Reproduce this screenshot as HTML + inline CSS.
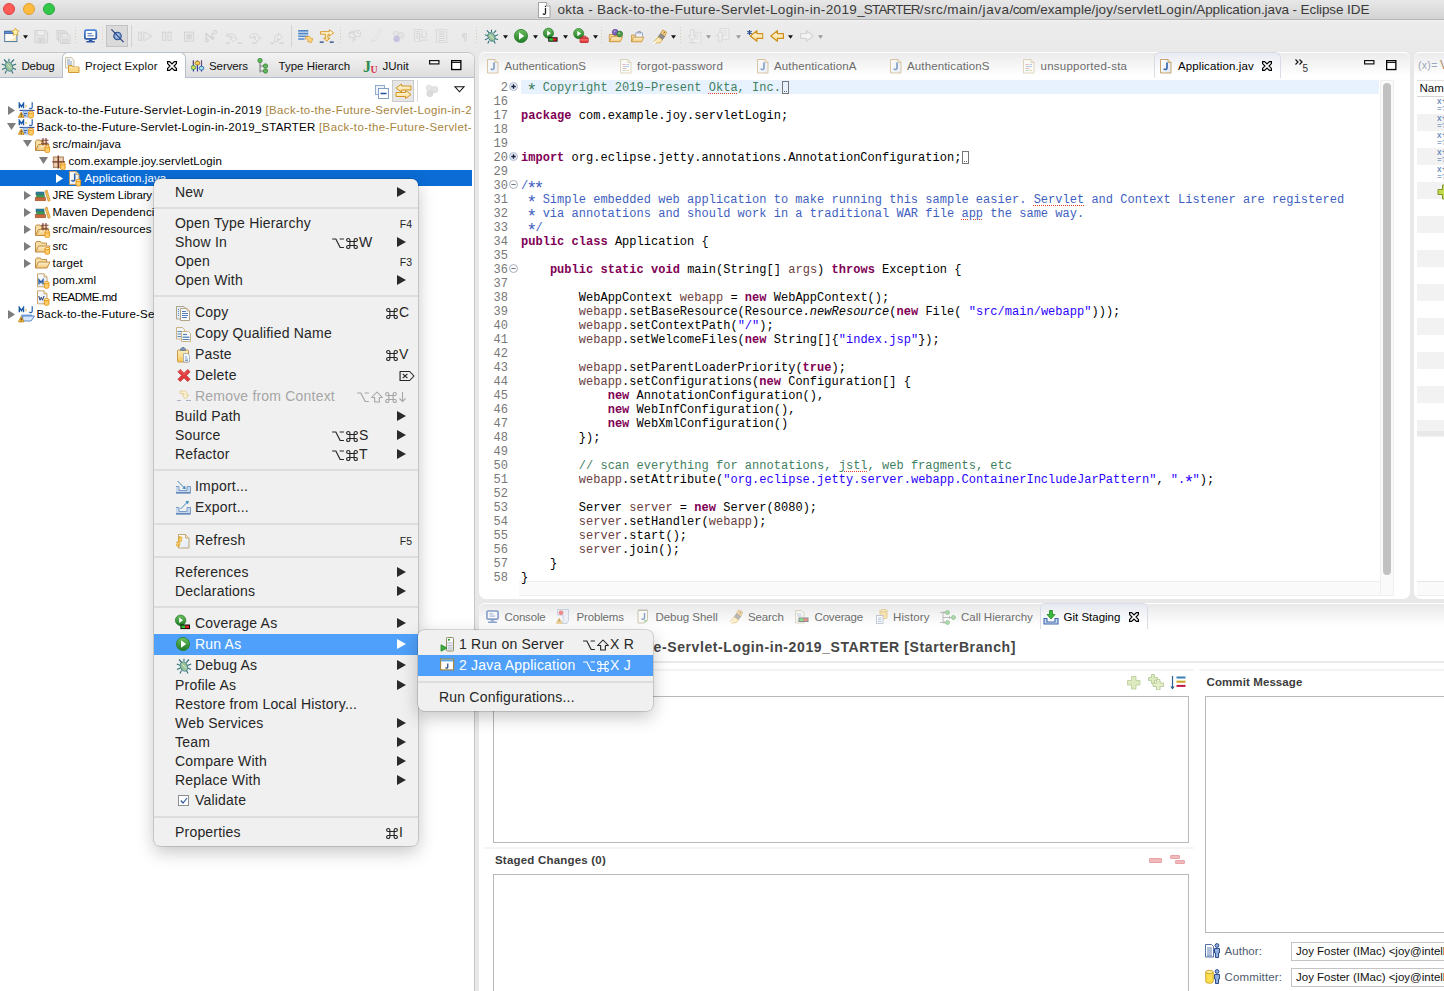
<!DOCTYPE html>
<html>
<head>
<meta charset="utf-8">
<title>Eclipse IDE</title>
<style>
*{box-sizing:border-box;margin:0;padding:0}
html,body{width:1444px;height:991px;overflow:hidden;background:#e8e8e8;font-family:"Liberation Sans",sans-serif;}
body{position:relative}
.abs{position:absolute}
svg.abs{overflow:visible}
.t{position:absolute;white-space:pre;line-height:1}
/* title bar */
#titlebar{left:0;top:0;width:1444px;height:20px;background:linear-gradient(#e8e8e8,#d3d3d3);border-bottom:1px solid #b7b7b7}
.tl{position:absolute;top:3px;width:12px;height:12px;border-radius:50%}
.ttl{top:3px;font-size:13.500px;color:#3a3a3a}
/* panels */
.panel{position:absolute;background:#fff;border:1px solid #d0d0d0}
/* tree */
.tr{position:absolute;left:0;width:472px;height:17px}
.tr .tx{position:absolute;top:1.500px;font-size:11.500px;white-space:pre;color:#000;line-height:13px}
.dec{color:#a78440}
/* code */
.ln{position:absolute;margin-top:1px;left:480px;width:28px;text-align:right;font:12px/14px "Liberation Mono",monospace;color:#787878;white-space:pre}
.cl{position:absolute;margin-top:1px;left:521px;font:12px/14px "Liberation Mono",monospace;color:#000;white-space:pre;letter-spacing:.019px}
.k{color:#7f0055;font-weight:bold}
.c{color:#3f5fbf}
.g{color:#3f7f5f}
.s{color:#2a00ff}
.v{color:#6a3e3e}
.i{font-style:italic}
.as{display:inline-block;width:7.200px;font-size:17.500px;line-height:0;position:relative;top:5.200px;text-indent:-1.650px;vertical-align:baseline}
.sq{text-decoration:underline;text-decoration-style:dotted;text-decoration-color:#e0402a;text-underline-offset:2px}
.fbox{display:inline-block;width:7px;height:13px;border:1px solid #777;vertical-align:-3px;margin-left:1px;position:relative}
.fbox:after{content:"";position:absolute;left:1px;bottom:1px;width:3px;height:1px;background:repeating-linear-gradient(90deg,#666 0 1px,transparent 1px 2px)}
.lt{top:61px;font-size:11.500px;color:#111}
.et{top:60.500px;font-size:11.500px}
.gl{display:block;flex:none}
.bt{top:611.500px;font-size:11.5px;letter-spacing:.15px;color:#6e6e6e}
#ghead{font-weight:bold;font-size:14px;color:#454545;letter-spacing:.6px}
.bl{font-weight:bold;font-size:11.5px;letter-spacing:.2px;color:#3c3c3c}
.box{background:#fff;border:1px solid #b9b9b9}
.al{font-size:11.5px;color:#4f5a6e;letter-spacing:.05px}
.inp{width:170px;height:19px;background:#fff;border:1px solid #c4c4c4}
.av{font-size:11.5px;color:#111;letter-spacing:0}
/* menus */
.menu{position:absolute;background:#f0f0f0;border-radius:6px;box-shadow:0 0 0 .5px rgba(0,0,0,.26),0 6px 18px rgba(0,0,0,.23);padding:4px 0;font-size:14px;letter-spacing:.2px;color:#262626}
.mi{position:relative;height:19px;white-space:pre}
.mi.ic{height:21px}
.mi .lb{position:absolute;left:21px;top:2px;line-height:15px}
.mi.ic .lb{left:41px;top:3px}
.mi .sc{position:absolute;top:2px;line-height:15px;height:15px;right:8px;display:flex;align-items:center}
.mi.ic .sc{top:3px}
.mi .ar{position:absolute;right:12.500px;top:3.800px;width:0;height:0;border-left:9px solid #2a2a2a;border-top:5px solid transparent;border-bottom:5px solid transparent}
.mi.ic .ar{top:4.800px}
.mi .sc.fk{font-size:10.500px;letter-spacing:0;right:6px;top:2.600px}
.mi.ic .sc.fk{top:3.700px}
.mi.hl{background:#4ea0fa;color:#fff}
.mi.hl .ar{border-left-color:#fff}
.mi.dis{color:#a6a6a6}
.sep{height:12px;position:relative}
.sep:after{content:"";position:absolute;left:0;right:0;top:5px;height:2px;background:#dddddd}
.mico{position:absolute;left:22px;top:2.500px;width:16px;height:16px;overflow:visible}
</style>
</head>
<body>
<svg width="0" height="0" style="position:absolute">
<defs>
<linearGradient id="gGreen" x1="0" y1="0" x2="0" y2="1"><stop offset="0" stop-color="#6cc15f"/><stop offset="1" stop-color="#1e7a25"/></linearGradient>
<linearGradient id="gFold" x1="0" y1="0" x2="0" y2="1"><stop offset="0" stop-color="#fff3cf"/><stop offset="1" stop-color="#f0c678"/></linearGradient>
<linearGradient id="gYel" x1="0" y1="0" x2="0" y2="1"><stop offset="0" stop-color="#fff1c0"/><stop offset="1" stop-color="#f7c55a"/></linearGradient>
<linearGradient id="gDoc" x1="0" y1="0" x2="1" y2="1"><stop offset="0" stop-color="#ffffff"/><stop offset="1" stop-color="#dfe8f5"/></linearGradient>
<g id="d-cyl"><path d="M.5 1.600v4.600c0 .7 1 1.100 2.300 1.100s2.300-.4 2.300-1.100V1.600" fill="#ffcf6b" stroke="#e3900e" stroke-width=".9"/><ellipse cx="2.800" cy="1.600" rx="2.300" ry="1.100" fill="#ffe9b0" stroke="#e3900e" stroke-width=".9"/></g>
<g id="d-warn"><path d="M3.200.6L.4 6.100h5.600z" fill="#f9c845" stroke="#c9861a" stroke-width=".8" stroke-linejoin="round"/><path d="M3.200 2.300v2" stroke="#3a2a10" stroke-width="1"/><rect x="2.700" y="4.700" width="1" height=".8" fill="#3a2a10"/></g>
<g id="d-mj"><path d="M1.300 6.300V1.400L3.400 4.600 5.500 1.400V6.300" fill="none" stroke="#1d5aa8" stroke-width="1.400"/><path d="M7.200 3l1.400 1.100-1.400 1.100" fill="none" stroke="#e2a53a" stroke-width=".9"/><path d="M14.200.3v5c0 1.600-2 1.800-2.900.5" fill="none" stroke="#2a62aa" stroke-width="1.200"/></g>

<symbol id="i-mj" viewBox="0 0 17 17"><use href="#d-mj"/><path d="M1.500 8.400H16.500" stroke="#2a4c9c" stroke-width="1.100"/><rect x="5" y="9" width="5" height="6" fill="#bcd6f5" stroke="#78a3de" stroke-width=".8"/><path d="M6 11.500h3M6 13.300h2" stroke="#2a4c9c" stroke-width=".9"/><use href="#d-warn" transform="translate(0,9.300)"/><use href="#d-cyl" transform="translate(10.200,8.700)"/></symbol>
<symbol id="i-mj2" viewBox="0 0 17 17"><use href="#d-mj"/><path d="M3.500 9h10.500l-2 5.500h-7z" fill="#a9cbf3" stroke="#5d8fd6" stroke-width=".8"/><path d="M4.500 10h12l-3.500 5h-8z" fill="#d6e7fb" stroke="#3d6fc0" stroke-width=".8"/><use href="#d-warn" transform="translate(0,9.800)"/></symbol>
<symbol id="i-srcf" viewBox="0 0 17 17"><path d="M1.500 14.500V5.500l1-1.500h3.500l1 1.500h5v3" fill="#f7dfa6" stroke="#b98235" stroke-width=".9"/><path d="M1.500 14.500l3-6h10.500l-3 6z" fill="url(#gFold)" stroke="#b98235" stroke-width=".9" stroke-linejoin="round"/><path d="M2 14l7-8" stroke="#c99a4a" stroke-width=".6"/><path d="M7 4.300h7.500M7 7.300h7.500M9 2v7.500M12 2v7.500" stroke="#7b3f30" stroke-width="1.100" fill="none"/><rect x="9.600" y="4.900" width="1.800" height="1.800" fill="#f0dcb8"/><use href="#d-cyl" transform="translate(10.500,9.300)"/></symbol>
<symbol id="i-pkg" viewBox="0 0 17 17"><rect x="3.300" y="3.900" width="10.200" height="10.800" fill="#dab892" stroke="#a87858" stroke-width=".8"/><rect x="4.600" y="5.200" width="2.600" height="2.600" fill="#ecd8bc"/><rect x="9.400" y="5.200" width="2.800" height="2.600" fill="#ecd8bc"/><rect x="4.600" y="10.200" width="2.600" height="3" fill="#ecd8bc"/><path d="M2.300 8.900h12.700M8.300 2.500v13" stroke="#74392b" stroke-width="1.400"/><use href="#d-cyl" transform="translate(10,9.400)"/></symbol>
<symbol id="i-jfile" viewBox="0 0 17 17"><path d="M3.500 1.500h6.500l3 3v10h-9.500z" fill="url(#gDoc)" stroke="#c39b5b" stroke-width=".9"/><path d="M10 1.500v3h3" fill="#f3e3c0" stroke="#c39b5b" stroke-width=".8"/><path d="M8.700 3.500v6c0 1.800-2.300 2-3.200.6" fill="none" stroke="#2c5fa5" stroke-width="1.500"/><use href="#d-cyl" transform="translate(9.500,8.800)"/></symbol>
<symbol id="i-lib" viewBox="0 0 17 17"><rect x="2" y="5" width="8" height="2.800" fill="#2f7f9a" stroke="#1f5f78" stroke-width=".5"/><rect x="2.500" y="7.800" width="8" height="2.800" fill="#3c9a5a" stroke="#2a7341" stroke-width=".5"/><rect x="1.200" y="10.600" width="10.500" height="3.200" fill="#c8683a" stroke="#9a4a24" stroke-width=".5"/><path d="M11 4l2-1 3.200 10.500-2 .8z" fill="#f4c05a" stroke="#c98a2a" stroke-width=".7" stroke-linejoin="round"/></symbol>
<symbol id="i-fold" viewBox="0 0 17 17"><path d="M1.500 13V4.500l1-1.500h4l1 1.500h5v2.500" fill="#f7dfa6" stroke="#b98235" stroke-width=".9"/><path d="M1.500 13l3-6h11.500l-3 6z" fill="url(#gFold)" stroke="#b98235" stroke-width=".9" stroke-linejoin="round"/></symbol>
<symbol id="i-fold2" viewBox="0 0 17 17"><path d="M1.500 14V5l1-1.500h4l1 1.500h5v2.500" fill="#f7dfa6" stroke="#b98235" stroke-width=".9"/><path d="M1.500 14l3-6h11.500l-3 6z" fill="url(#gFold)" stroke="#b98235" stroke-width=".9" stroke-linejoin="round"/><use href="#d-cyl" transform="translate(10.500,9)"/></symbol>
<symbol id="i-pom" viewBox="0 0 17 17"><path d="M3.500 1.800h6.500l3 3v10h-9.500z" fill="url(#gDoc)" stroke="#c39b5b" stroke-width=".9"/><path d="M10 1.800v3h3" fill="#f3e3c0" stroke="#c39b5b" stroke-width=".8"/><path d="M5 12.500V7.800l2 2.700 2-2.700v4.700" fill="none" stroke="#2c5fa5" stroke-width="1.400"/><use href="#d-cyl" transform="translate(9.800,9)"/></symbol>
<symbol id="i-md" viewBox="0 0 17 17"><path d="M3.500 1.800h6.500l3 3v10h-9.500z" fill="url(#gDoc)" stroke="#c39b5b" stroke-width=".9"/><path d="M10 1.800v3h3" fill="#f3e3c0" stroke="#c39b5b" stroke-width=".8"/><path d="M4.800 7.500l1.300 3.700 1.200-3 1.200 3 1.300-3.700" fill="none" stroke="#2c3f7a" stroke-width="1"/><path d="M4.500 7.500h1M9.300 7.500h1" stroke="#2c3f7a" stroke-width=".8"/><use href="#d-cyl" transform="translate(9.800,9)"/></symbol>

<!-- menu icons -->
<symbol id="m-copy" viewBox="0 0 16 16"><path d="M.5 1.500h7.500l2 2v10.500h-9.500z" fill="#e4ecf7" stroke="#a89a78" stroke-width=".9"/><path d="M2 4.500h1M2 6.500h1M2 8.500h1M2 10.500h1" stroke="#5d86b8" stroke-width="1"/><path d="M4.500 3.500h6.500l2.500 2.500v9.500h-9z" fill="#f9fbfe" stroke="#a89a78" stroke-width=".9"/><path d="M11 3.500v2.500h2.500" fill="#ecdcb4" stroke="#a89a78" stroke-width=".7"/><path d="M6 6.500h4M6 8.500h6M6 10.500h6M6 12.500h5" stroke="#4f7db5" stroke-width="1"/></symbol>
<symbol id="m-copyq" viewBox="0 0 16 16"><path d="M.5 1.500h6l2 2v9.500h-8z" fill="#eef3fa" stroke="#c7ad78" stroke-width=".9"/><path d="M1.500 5.500h5M1.500 8h4M1.500 10.500h4" stroke="#5d86b8" stroke-width="1.200"/><path d="M5.500 5.500h7l2 2v8h-9z" fill="#f9fbfe" stroke="#c7ad78" stroke-width=".9"/><path d="M7 8.500h4" stroke="#4f7db5" stroke-width="1.200"/><rect x="6.500" y="10.500" width="7" height="1.500" fill="#6f93c4"/><path d="M6.500 13.500h7" stroke="#4f7db5" stroke-width="1"/></symbol>
<symbol id="m-paste" viewBox="0 0 16 16"><rect x="1.500" y="3" width="11" height="12" rx="1" fill="url(#gYel)" stroke="#c98f3a" stroke-width=".9"/><path d="M4.500 3.500v-1.500l1.500-1.500h2l1.500 1.500v1.500z" fill="#7f93b0" stroke="#5b6f8e" stroke-width=".7"/><path d="M7.500 6.500h4l2 2v6.500h-6z" fill="#f7fafd" stroke="#9aa3ad" stroke-width=".8"/><path d="M9 10h2M9 12h3M9 13.500h3" stroke="#5d86b8" stroke-width=".8"/></symbol>
<symbol id="m-del" viewBox="0 0 16 16"><path d="M2 3.800L4.300 1.500 8 5.200 11.700 1.500 14 3.800 10.300 7.500 14 11.200 11.700 13.500 8 9.800 4.300 13.500 2 11.200 5.700 7.500z" fill="#e03a3c" stroke="#c2272b" stroke-width=".8" stroke-linejoin="round"/><path d="M3.300 3.800l1-1 3.700 3.700 3.700-3.700" stroke="#f2787a" stroke-width=".8" fill="none"/></symbol>
<symbol id="m-rem" viewBox="0 0 16 16"><path d="M4 2h4c2.500 0 3.500 2 3 4h1.800l-3.300 4-3.300-4h1.800c.3-1-.2-1.500-1-1.500h-3z" fill="#fbf0cf" stroke="#e2c98a" stroke-width=".8" stroke-linejoin="round"/><path d="M1 11.500h4M10 11.500h5" stroke="#a9b3c4" stroke-width="1"/></symbol>
<symbol id="m-imp" viewBox="0 0 16 16"><path d="M-.5 7.500h3.500v4h8v-4h3.500v6h-15z" fill="#c7d8ee" stroke="#6f93c4" stroke-width=".9"/><path d="M-.5 14h15" stroke="#5b7fb5" stroke-width="1.200"/><path d="M1.500 2l7 7" stroke="#3b8ab8" stroke-width="1"/><path d="M9.800 10.300l-.8-3.600-2.800 2.800z" fill="#3b8ab8"/></symbol>
<symbol id="m-exp" viewBox="0 0 16 16"><path d="M-.5 7.500h3.500v4h8v-4h3.500v6h-15z" fill="#c7d8ee" stroke="#6f93c4" stroke-width=".9"/><path d="M-.5 14h15" stroke="#5b7fb5" stroke-width="1.200"/><path d="M4.500 9l7-7" stroke="#3b8ab8" stroke-width="1"/><path d="M12.800.7l-3.600.8 2.800 2.800z" fill="#3b8ab8"/></symbol>
<symbol id="m-refresh" viewBox="0 0 16 16"><path d="M2.500 1.500h7l3.500 3.500v10h-10.500z" fill="url(#gDoc)" stroke="#b9a06a" stroke-width=".9"/><path d="M9.500 1.500v3.500h3.500" fill="#f3e3c0" stroke="#b9a06a" stroke-width=".8"/><path d="M3.500 3.500c2.500-.5 3.500 2 1.500 3.300l1.200 1-3.700.5.300-3.500 1 .9c.8-.7.300-1.500-.8-1.200z" fill="#ffd76a" stroke="#d69a1c" stroke-width=".7" stroke-linejoin="round"/><path d="M3 13.500c-2.500.5-3.500-2-1.500-3.300l-1.200-1 3.700-.5-.3 3.500-1-.9c-.8.700-.3 1.500.8 1.200z" fill="#ffd76a" stroke="#d69a1c" stroke-width=".7" stroke-linejoin="round"/></symbol>
<symbol id="m-run" viewBox="1 1 16 16" overflow="visible"><circle cx="8" cy="8" r="6.600" fill="url(#gGreen)" stroke="#2a7d2c" stroke-width=".8"/><path d="M6 4.300l5.200 3.700L6 11.700z" fill="#fff"/></symbol>
<symbol id="m-cov" viewBox="1 1.500 16 16" overflow="visible"><circle cx="5.600" cy="5.800" r="5.200" fill="url(#gGreen)" stroke="#2a7d2c" stroke-width=".8"/><path d="M4.200 3l4 2.800-4 2.800z" fill="#fff"/><rect x="5.400" y="10" width="9.600" height="4.600" fill="#111"/><rect x="6.400" y="11" width="3.800" height="2.600" fill="#2fc534"/><rect x="10.200" y="11" width="3.800" height="2.600" fill="#d62323"/></symbol>
<symbol id="m-bug" viewBox="0 0 16 16"><path d="M8 3.500V.8M5.800 4.500L3 1.500M10.200 4.500L13 1.500M4.500 7.500L.8 6M11.500 7.500L15.200 6M4.500 10L1 11.500M11.500 10L15 11.500M5.500 12.500L4 15.500M10.500 12.500L12 15.500" stroke="#2f6f78" stroke-width="1.100" fill="none"/><ellipse cx="8" cy="8.500" rx="3.500" ry="4.800" fill="#9cc49a" stroke="#3b7f86" stroke-width=".9" transform="rotate(-25 8 8.500)"/><path d="M6.500 6.500l3.500 4" stroke="#d9ead4" stroke-width="1"/></symbol>
<symbol id="m-check" viewBox="0 0 16 16"><rect x="2.500" y="2.500" width="10" height="10" fill="#fff" stroke="#8a8f96" stroke-width="1"/><path d="M4.800 7.500l2.200 2.500 4-5" fill="none" stroke="#2d5aa0" stroke-width="1.200"/></symbol>
<symbol id="m-ros" viewBox="0 0 16 16"><rect x="6.500" y=".5" width="7" height="13.500" rx=".8" fill="#f0f2f6" stroke="#8f8f62" stroke-width="1"/><rect x="7.500" y="1.500" width="5" height="3" fill="#fff"/><rect x="8" y="2" width="2" height="1.600" fill="#2ba02b"/><path d="M7.500 6h5M7.500 8.500h5" stroke="#b8bcc8" stroke-width="1"/><rect x="8" y="9.500" width="4.500" height="3.500" fill="#d0d4e0"/><path d="M1 7.800l6 3.200-6 3.200z" fill="#3fae3f" stroke="#1f8a25" stroke-width=".8" stroke-linejoin="round"/></symbol>
<symbol id="m-japp" viewBox="0 0 16 16"><rect x=".6" y="1.100" width="13" height="10.800" fill="#fff" stroke="#a8853a" stroke-width="1.100"/><rect x="1.100" y="1.600" width="12" height="1.800" fill="#58a6e8"/><path d="M7.800 5.500v3.500c0 1.300-1.700 1.400-2.300.5" fill="none" stroke="#1f3f7a" stroke-width="1.200"/></symbol>
</defs>
</svg>
<svg width="0" height="0" style="position:absolute">
<defs>
<linearGradient id="gArr" x1="0" y1="0" x2="0" y2="1"><stop offset="0" stop-color="#fffbe6"/><stop offset="1" stop-color="#fbd98a"/></linearGradient>
<linearGradient id="gBlu" x1="0" y1="0" x2="0" y2="1"><stop offset="0" stop-color="#4f86d6"/><stop offset="1" stop-color="#2b57a6"/></linearGradient>
<!-- toolbar -->
<symbol id="t-new" viewBox="0 0 16 16"><rect x=".5" y="3.500" width="13" height="11" fill="#fdfdf6" stroke="#4a6f9e" stroke-width="1"/><rect x=".5" y="3.500" width="13" height="2.500" fill="#5b8fd0" stroke="#3b66a3" stroke-width=".8"/><path d="M3 13.500c4 0 8-2 9.500-6v6z" fill="#f6e3a6" opacity=".8"/><path d="M12 0l1.200 2.600L16 3.200l-2 2 .5 2.800L12 6.700 9.500 8l.5-2.800-2-2 2.800-.6z" fill="#fff3b0" stroke="#d89c1f" stroke-width=".8" stroke-linejoin="round"/></symbol>
<symbol id="t-save" viewBox="0 0 16 16"><path d="M.5.500h13l2 2v13h-15z" fill="#e6e6e6" stroke="#cfcfcf"/><rect x="3" y=".5" width="9" height="6" fill="#eeeeee" stroke="#cfcfcf" stroke-width=".8"/><rect x="4" y="9.500" width="8" height="6" fill="#dedede" stroke="#cfcfcf" stroke-width=".8"/><rect x="6" y="11" width="2" height="3" fill="#cfcfcf"/></symbol>
<symbol id="t-saveall" viewBox="0 0 16 16"><path d="M.5.500h9l1.500 1.500v9h-10.500z" fill="#e6e6e6" stroke="#cfcfcf" stroke-width=".9"/><path d="M2.500 2.500h9l1.500 1.500v9h-10.500z" fill="#e6e6e6" stroke="#cfcfcf" stroke-width=".9"/><path d="M4.500 4.500h9l2 2v9h-11z" fill="#e8e8e8" stroke="#cfcfcf" stroke-width=".9"/><rect x="7" y="10.500" width="6" height="5" fill="#dedede" stroke="#cfcfcf" stroke-width=".8"/><rect x="6.500" y="4.500" width="6" height="3.500" fill="#eee" stroke="#cfcfcf" stroke-width=".7"/></symbol>
<symbol id="t-mon" viewBox="0 0 16 16"><rect x="1" y="1" width="13" height="10" rx="1.500" fill="#fff" stroke="url(#gBlu)" stroke-width="2"/><path d="M4 5h5M4 7.500h7" stroke="#2b57a6" stroke-width="1"/><path d="M5.500 12h4v1.500h-4z" fill="#2b57a6"/><rect x="2.500" y="13.500" width="10" height="1.500" rx=".7" fill="#2b57a6"/></symbol>
<symbol id="t-skip" viewBox="0 0 16 16"><circle cx="8" cy="8.500" r="4" fill="#7fa6d6" stroke="#2f4f8e" stroke-width="1.200"/><circle cx="8" cy="8.500" r="2" fill="#b8d0ee"/><path d="M1.500 1.500l13 13.500" stroke="#2a3f7e" stroke-width="1.300"/></symbol>
<symbol id="t-resume" viewBox="0 0 16 16"><rect x=".5" y="3.500" width="3" height="9" fill="#e9e9e9" stroke="#d2d2d2"/><path d="M6 3l9 5-9 5z" fill="#e9e9e9" stroke="#d2d2d2" stroke-linejoin="round"/></symbol>
<symbol id="t-pause" viewBox="0 0 16 16"><rect x="2.500" y="3.500" width="3.500" height="9" fill="#e9e9e9" stroke="#d2d2d2"/><rect x="8.500" y="3.500" width="3.500" height="9" fill="#e9e9e9" stroke="#d2d2d2"/></symbol>
<symbol id="t-stop" viewBox="0 0 16 16"><rect x="2.500" y="3.500" width="10" height="10" fill="#e9e9e9" stroke="#d2d2d2"/><rect x="4.500" y="5.500" width="6" height="6" fill="#d9d9d9"/></symbol>
<symbol id="t-disc" viewBox="0 0 16 16"><path d="M2.500 12V5l6.500 6V4.500" fill="none" stroke="#cfcfcf" stroke-width="1.300"/><circle cx="3" cy="12.500" r="1.800" fill="#e4e4e4" stroke="#cfcfcf"/><circle cx="12" cy="3.500" r="2" fill="#e8e8e8" stroke="#cfcfcf"/><path d="M9 12l3-3" stroke="#d4d4d4" stroke-width="1.200"/></symbol>
<symbol id="t-stepin" viewBox="0 0 18 16"><path d="M1 4.500h6c2.500 0 3 1.500 3 3.500v1h2.500l-4 4-4-4H7V8c0-.8-.2-1-1-1H1z" fill="#ececec" stroke="#d3d3d3" stroke-linejoin="round"/><path d="M0 14.500h4M13 14.500h5" stroke="#cfcfcf" stroke-width="1.200"/></symbol>
<symbol id="t-stepov" viewBox="0 0 16 16"><path d="M1.500 8.500c0-6 10-6 10 0h2.500l-4 4-4-4h2.500c0-2.500-4-2.500-4 0z" fill="#ececec" stroke="#d3d3d3" stroke-linejoin="round"/><path d="M4.500 14.500h5" stroke="#cfcfcf" stroke-width="1.200"/></symbol>
<symbol id="t-stepret" viewBox="0 0 16 16"><path d="M5 13V7.500c0-1 .5-1.500 1.500-1.500H9V3.500l4.500 4-4.500 4V9H8v4z" fill="#ececec" stroke="#d3d3d3" stroke-linejoin="round"/><path d="M0 14.500h4M10 14.500h5" stroke="#cfcfcf" stroke-width="1.200"/></symbol>
<symbol id="t-drop" viewBox="0 0 16 16"><path d="M0 2h11M0 5h11M0 8h11M0 11h7" stroke="#4f86c6" stroke-width="1.800"/><path d="M0 3.500h11M0 6.500h11" stroke="#a9c7ea" stroke-width="1"/><path d="M8 8.500c4-1 6 .5 6.500 2.500l1.500-.5-1.500 4.500-4.500-1.500 1.500-1c-.5-1-1.500-1.500-3.500-1.500z" fill="#ffd98a" stroke="#d9962a" stroke-width=".8" stroke-linejoin="round"/></symbol>
<symbol id="t-filt" viewBox="0 0 17 16"><path d="M1 3h10V.8L16 4.500 11 8V6H9.500v4.500h2L8 14 4.500 10.500h2V6H1z" fill="url(#gArr)" stroke="#d39420" stroke-width="1" stroke-linejoin="round"/><path d="M0 15h4.500M11.500 15H16" stroke="#1f3f7e" stroke-width="1.600"/></symbol>
<symbol id="t-d1" viewBox="0 0 16 16"><path d="M2 4.500l3-2h5l-1 2z M2 4.500h7v5H2z" fill="#e9e9e9" stroke="#d3d3d3" stroke-width=".9"/><circle cx="11.500" cy="5" r="3.500" fill="#efefef" stroke="#d0d0d0"/><path d="M11.500 3v2h2" stroke="#cfcfcf" fill="none"/><path d="M6 9.500v6l4.500-4.500z" fill="#dcdcdc"/></symbol>
<symbol id="t-d2" viewBox="0 0 16 16"><path d="M11.500.5L13 2 6 14.500l-5 .5c2-1 3-2 4-4z" fill="#efefef" stroke="#dddddd" stroke-linejoin="round"/><path d="M0 15h6" stroke="#e0e0e0"/></symbol>
<symbol id="t-d3" viewBox="0 0 16 16"><circle cx="4.500" cy="4.500" r="3.300" fill="#e4e4e4" stroke="#d6d6d6" stroke-width=".7"/><circle cx="11" cy="6.500" r="3.800" fill="#e2e2e2" stroke="#d4d4d4" stroke-width=".7"/><circle cx="5.500" cy="11" r="3.500" fill="#c9c3e3" stroke="#bdb6da" stroke-width=".7"/></symbol>
<symbol id="t-d3g" viewBox="0 0 16 16"><circle cx="4.500" cy="4.500" r="3.300" fill="#e6e6e6" stroke="#dadada" stroke-width=".7"/><circle cx="11" cy="6.500" r="3.800" fill="#e3e3e3" stroke="#d8d8d8" stroke-width=".7"/><circle cx="5.500" cy="11" r="3.500" fill="#dcdcdc" stroke="#d2d2d2" stroke-width=".7"/></symbol>
<symbol id="t-d4" viewBox="0 0 16 16"><path d="M.5.500h9v6h-3v8.500h-6z" fill="#ededed" stroke="#d6d6d6"/><path d="M2 3h5M2 5h5M2 7h3M2 9h3M2 11h3" stroke="#d2d2d2" stroke-width=".9"/><path d="M14.500 2v8h-5V8l-3.500 3.500L9.500 15v-2h8" fill="#ededed" stroke="#d3d3d3" stroke-linejoin="round"/></symbol>
<symbol id="t-d5" viewBox="0 0 16 16"><rect x="1.500" y=".5" width="12" height="14.500" fill="#eeeeee" stroke="#d6d6d6"/><path d="M4 3h7M4 5.500h7M4 8h7M4 10.500h7M4 13h7" stroke="#d0d0d0" stroke-width="1.100"/><path d="M3 1v14M12 1v14" stroke="#dcdcdc" stroke-width=".6" stroke-dasharray="1 1"/></symbol>
<symbol id="t-pil" viewBox="0 0 10 16"><path d="M5.500 14V2.500M8 14V2.500M9 2.500H4.500C1 2.500 1 8 4.500 8H5.500" fill="none" stroke="#d4d4d4" stroke-width="1.300"/><path d="M4.500 2.500C1.500 2.500 1.500 8 4.500 8h1V2.500z" fill="#d8d8d8"/></symbol>
<symbol id="t-extrun" viewBox="0 0 16 16"><circle cx="5.600" cy="5.800" r="5.200" fill="url(#gGreen)" stroke="#2a7d2c" stroke-width=".8"/><path d="M4.200 3l4 2.800-4 2.800z" fill="#fff"/><rect x="7" y="10" width="8.500" height="5" rx=".8" fill="#e23a3a" stroke="#b51f22" stroke-width=".8"/><path d="M9.500 10v-1.500h3.500V10" fill="none" stroke="#b51f22" stroke-width="1"/><path d="M7 12.300h8.500" stroke="#f7a0a0" stroke-width=".8"/></symbol>
<symbol id="t-opent" viewBox="0 0 17 16"><path d="M1 14V6h4l1 1h6.500v2" fill="#f4d9a0" stroke="#c98a2c" stroke-width=".9"/><path d="M1 14l2.500-5.500h12L13 14z" fill="url(#gFold)" stroke="#c98a2c" stroke-width=".9" stroke-linejoin="round"/><circle cx="7.500" cy="3.500" r="3.200" fill="#7b63b8" stroke="#4f3d8e" stroke-width=".7"/><circle cx="6.800" cy="2.600" r="1" fill="#b9a8e2"/><circle cx="12.500" cy="5.500" r="3.200" fill="#4d9a4a" stroke="#2f6f2e" stroke-width=".7"/><circle cx="11.800" cy="4.600" r="1" fill="#9fd39a"/></symbol>
<symbol id="t-opent2" viewBox="0 0 17 16"><path d="M1 14V6h4l1 1h6.500v2" fill="#f4d9a0" stroke="#c98a2c" stroke-width=".9"/><rect x="6" y="3.500" width="8" height="5.500" fill="#eef2fa" stroke="#8a99b8" stroke-width=".9"/><path d="M8.500 3.500V2h3v1.500" fill="none" stroke="#6f7f9e" stroke-width="1"/><path d="M1 14l2.500-5.500h12L13 14z" fill="url(#gFold)" stroke="#c98a2c" stroke-width=".9" stroke-linejoin="round"/></symbol>
<symbol id="t-pen" viewBox="0 0 17 16"><path d="M11.500 1l4 2.500-2 4.500-4.500-3z" fill="#f3d08a" stroke="#c98a2c" stroke-width=".8" stroke-linejoin="round"/><path d="M13.500 3l-1 1.800" stroke="#6a4a1a" stroke-width=".9"/><path d="M9 5l4.500 3-2.500 3.500-4.500-3z" fill="#8f8f8f" stroke="#6a6a6a" stroke-width=".7"/><path d="M6.500 8.500l4.500 3-2 3-5.500.5c-1 0-1.500-1-1-2z" fill="#fce9b8" stroke="#d9a23a" stroke-width=".8" stroke-linejoin="round"/><path d="M1.500 15.500l2.500-2" stroke="#fff" stroke-width="1.500"/></symbol>
<symbol id="t-annn" viewBox="0 0 16 16"><rect x="4.500" y="3.500" width="10" height="12" fill="#eeeeee" stroke="#dadada"/><path d="M6.500 6h6M6.500 8.500h6M6.500 11h6" stroke="#dcdcdc"/><path d="M3 .5h3.500v7H9L4.800 12 .5 7.500H3z" fill="#efefef" stroke="#d3d3d3" stroke-linejoin="round"/><path d="M1 15h7" stroke="#d8d8d8" stroke-width="1.300"/></symbol>
<symbol id="t-annp" viewBox="0 0 16 16"><rect x="4.500" y=".5" width="10" height="12" fill="#eeeeee" stroke="#dadada"/><path d="M6.500 3h6M6.500 5.500h6M6.500 8h6" stroke="#dcdcdc"/><path d="M3 15.500h3.500v-7H9L4.800 4 .5 8.500H3z" fill="#efefef" stroke="#d3d3d3" stroke-linejoin="round"/></symbol>
<symbol id="t-lastedit" viewBox="0 0 16.500 12"><path d="M15.900 3.600v4.800H9.900V11.300L3.300 6 9.900.7v2.900z" fill="url(#gArr)" stroke="#d08e1c" stroke-width="1.200" stroke-linejoin="round"/><path d="M2.500 0v5M.3 1.200l4.400 2.600M4.700 1.200L.3 3.800" stroke="#2a4f8e" stroke-width="1.100"/></symbol>
<symbol id="t-back" viewBox="0 0 14 12"><path d="M13.400 3.600v4.800H7.400V11.300L.8 6 7.400.7v2.900z" fill="url(#gArr)" stroke="#d08e1c" stroke-width="1.200" stroke-linejoin="round"/></symbol>
<symbol id="t-fwd" viewBox="0 0 14 12"><path d="M.6 3.600v4.800H6.600V11.300L13.200 6 6.600.7v2.900z" fill="#f4f4f4" stroke="#d4d4d4" stroke-width="1.200" stroke-linejoin="round"/></symbol>
<!-- tabs -->
<symbol id="b-pe" viewBox="0 0 16 16"><path d="M1.500.5h6l2.500 2.500v8h-8.500z" fill="#f4f4f0" stroke="#bfb293" stroke-width=".8"/><path d="M3 3h3M3 5h5M3 7h5" stroke="#6f93c4" stroke-width=".8"/><path d="M4.500 8.500h3.500l1 1.500h6v5.500h-10.500z" fill="#fbd780" stroke="#c98f2a" stroke-width=".9" stroke-linejoin="round"/><path d="M5 10.800h9.500" stroke="#fff0c0" stroke-width=".8"/></symbol>
<symbol id="b-srv" viewBox="0 0 14 12"><path d="M2.400.5v11M6.400.5v11M10.500.5v11" stroke="#2a35a0" stroke-width="1.100"/><path d="M2.400.5v4M10.500.5v5" stroke="#6a4a78" stroke-width="1.100"/><ellipse cx="2.400" cy="7.500" rx="2.400" ry="1.900" fill="#d8e05a" stroke="#2f8f4a" stroke-width=".9"/><ellipse cx="6.400" cy="3.100" rx="2.400" ry="1.900" fill="#f7d35a" stroke="#a9780f" stroke-width=".9"/><ellipse cx="10.500" cy="8.200" rx="2.400" ry="1.900" fill="#a8e6e6" stroke="#2f62ae" stroke-width=".9"/></symbol>
<symbol id="b-th" viewBox="0 0 12 16"><path d="M3 3v11.500M3 8h4.500M3 13h4.500" stroke="#777" stroke-width="1" fill="none"/><circle cx="3" cy="2.500" r="2.200" fill="#5fb85a" stroke="#2f7f2e" stroke-width=".7"/><circle cx="8.500" cy="8" r="2.200" fill="#5fb85a" stroke="#2f7f2e" stroke-width=".7"/><circle cx="8.500" cy="13" r="2.200" fill="#5fb85a" stroke="#2f7f2e" stroke-width=".7"/></symbol>
<symbol id="b-x" viewBox="0 0 10 10"><path d="M.6.600H2.600L5 3 7.400.6H9.400V2.600L7 5 9.400 7.400V9.400H7.400L5 7 2.600 9.400H.6V7.400L3 5 .6 2.600z" fill="#fff" stroke="#000" stroke-width="1.200" stroke-linejoin="miter"/></symbol>
<symbol id="b-min" viewBox="0 0 11 5"><rect x=".6" y=".6" width="9.300" height="3.300" fill="#fff" stroke="#111" stroke-width="1.200"/></symbol>
<symbol id="b-max" viewBox="0 0 12 11"><rect x=".65" y=".65" width="9.200" height="8.900" fill="#fff" stroke="#000" stroke-width="1.300"/><path d="M.6 2.400h9.300" stroke="#000" stroke-width="1"/></symbol>
<symbol id="b-coll" viewBox="0 0 14 14"><rect x=".5" y=".5" width="9" height="9" fill="#eef3fa" stroke="#8aa3c8" stroke-width=".9"/><rect x="3.500" y="3.500" width="10" height="10" fill="#fff" stroke="#7a95be" stroke-width=".9"/><path d="M5.500 8.500h6" stroke="#1f4f9e" stroke-width="1.500"/></symbol>
<symbol id="b-link" viewBox="0 0 17 16"><path d="M16 3v4H6.500v2L1 5l5.500-4v2z" fill="url(#gArr)" stroke="#d39420" stroke-width="1" stroke-linejoin="round"/><path d="M1 9.500v4h9.500v2L16 11.500l-5.500-4v2z" fill="url(#gArr)" stroke="#d39420" stroke-width="1" stroke-linejoin="round"/></symbol>
<symbol id="b-vm" viewBox="0 0 11 7"><path d="M1 .8h9L5.500 5.800z" fill="#fff" stroke="#111" stroke-width="1.100" stroke-linejoin="miter"/></symbol>
<symbol id="b-jf" viewBox="0 0 12 15"><path d="M.5.500h7.500l3 3v10.500h-10.500z" fill="url(#gDoc)" stroke="#c39b5b" stroke-width=".9"/><path d="M8 .5v3h3" fill="#f3e3c0" stroke="#c39b5b" stroke-width=".8"/><path d="M7 3.500v5.500c0 1.800-2.300 2-3.200.6" fill="none" stroke="#2c5fa5" stroke-width="1.600"/></symbol>
<symbol id="b-html" viewBox="0 0 12 15"><path d="M.5.500h7.500l3 3v10.500h-10.500z" fill="#fdfdfb" stroke="#c9b78f" stroke-width=".9"/><path d="M8 .5v3h3" fill="#f3e3c0" stroke="#c9b78f" stroke-width=".8"/><path d="M2.500 5.500h3M2.500 9.500h4" stroke="#e08a8a" stroke-width="1"/><path d="M6.500 5.500h2.500M3 7.500h6" stroke="#8aa8d8" stroke-width="1"/><path d="M2.500 11.500h3" stroke="#8ac88a" stroke-width="1"/><path d="M6.500 11.500h2.500" stroke="#d8b86a" stroke-width="1"/></symbol>
<!-- bottom -->
<symbol id="b-con" viewBox="0 0 14 14"><rect x="1" y="1" width="11.500" height="8.500" rx="1.200" fill="#fff" stroke="#3f67b0" stroke-width="1.700"/><path d="M3.500 4h4M3.500 6.300h6" stroke="#3f67b0" stroke-width=".9"/><path d="M5 10.500h3.500v1.500H5z" fill="#3f67b0"/><rect x="2" y="12" width="9.500" height="1.500" rx=".7" fill="#3f67b0"/></symbol>
<symbol id="b-prob" viewBox="0 0 15 15"><path d="M1.500.5h11v11c0 1-1 1.500-1.500 3H6c.5-1.500 1-2 1-3V6h-5.500z" fill="#e6ecf5" stroke="#9fb0cc" stroke-width=".8"/><circle cx="5" cy="3.800" r="2.400" fill="#e8474a"/><path d="M3.200 9L.5 14.200h5.400z" fill="#f9c845" stroke="#c9861a" stroke-width=".7" stroke-linejoin="round"/><path d="M3.200 10.800v1.700" stroke="#3a2a10" stroke-width=".9"/></symbol>
<symbol id="b-dsh" viewBox="0 0 12 15"><path d="M1 1.500h9.500v9.500l-3 3H1z" fill="#fbfbf4" stroke="#a9a078" stroke-width=".9"/><path d="M1.500.8h9" stroke="#7a7a7a" stroke-width="1" stroke-dasharray="1 1"/><path d="M7.500 4v5c0 1.600-2 1.800-2.900.5" fill="none" stroke="#3f67b0" stroke-width="1.400"/><path d="M10.500 11l-3 3v-3z" fill="#5fb85a"/></symbol>
<symbol id="b-hist" viewBox="0 0 12 15"><path d="M4 1.500v7c0 .8 1.500 1.300 3.500 1.300s3.500-.5 3.500-1.300v-7" fill="#f7d98a" stroke="#d3a43a" stroke-width=".8"/><ellipse cx="7.500" cy="1.700" rx="3.500" ry="1.200" fill="#fbe9b4" stroke="#d3a43a" stroke-width=".8"/><rect x=".5" y="6.500" width="6.500" height="8" fill="#fff" stroke="#8d99b3" stroke-width=".8"/><path d="M2 9h3.500M2 10.800h3.500M2 12.600h3.500" stroke="#5f7fb8" stroke-width=".7"/></symbol>
<symbol id="b-cov" viewBox="0 0 14 14"><path d="M.5.500h6l2.500 2.500v10h-8.500z" fill="#f8f8f4" stroke="#bfb293" stroke-width=".8"/><path d="M2 4h4M2 6h5M2 11h3" stroke="#8aa8d8" stroke-width=".8"/><rect x="3.500" y="7.500" width="10" height="4.500" fill="#444"/><rect x="4.500" y="8.500" width="4" height="2.500" fill="#3ecf45"/><rect x="8.500" y="8.500" width="4" height="2.500" fill="#e25050"/></symbol>
<symbol id="b-call" viewBox="0 0 16 15"><path d="M0 2.500h6M3 7.500h9M0 12.500h6M3 2.500v10" stroke="#8a8a8a" stroke-width=".9" fill="none"/><path d="M3.500 1l1.500 1.500-1.500 1.500M9 6l1.500 1.500L9 9M3.500 11l1.500 1.500-1.500 1.500" stroke="#8a8a8a" stroke-width=".8" fill="none"/><circle cx="7.500" cy="2.500" r="2" fill="#7fc87a" stroke="#3f8f3e" stroke-width=".7"/><circle cx="13.500" cy="7.500" r="2" fill="#7fc87a" stroke="#3f8f3e" stroke-width=".7"/><circle cx="7.500" cy="12.500" r="2" fill="#7fc87a" stroke="#3f8f3e" stroke-width=".7"/></symbol>
<symbol id="b-git" viewBox="0 0 16 15"><path d="M1 8.500h3v3.500h8V8.500h3V14H1z" fill="#c7d8ee" stroke="#3f67b0" stroke-width="1.100"/><path d="M6.500.5h3v4h2.500L8 9 4 4.500h2.500z" fill="#3fb83f" stroke="#1f8a25" stroke-width=".8" stroke-linejoin="round"/></symbol>
<symbol id="b-add" viewBox="0 0 14 14"><path d="M4.500.5h4.500v4h4v4.500h-4v4h-4.500v-4h-4V4.500h4z" fill="#dde9bf" stroke="#bdd0a0" stroke-width=".9"/></symbol>
<symbol id="b-addall" viewBox="0 0 16 16"><path d="M3.500.5h3v3h3v3h-3v3h-3v-3h-3v-3h3z" fill="#dde9bf" stroke="#b6cc98" stroke-width=".9"/><path d="M8.500 5.500h3.500v3.500h3.500v3.500H12v3.500H8.500V12.500H5V9h3.500z" fill="#e4eec8" stroke="#b6cc98" stroke-width=".9"/></symbol>
<symbol id="b-sort" viewBox="0 0 16 14"><path d="M2.500 0v12" stroke="#2f5f8e" stroke-width="1.200"/><path d="M.3 10.500h4.400L2.500 13.500z" fill="#2f5f8e"/><path d="M6.500 1.500h9" stroke="#3b7fb0" stroke-width="2"/><path d="M6.500 5.700h9" stroke="#c9a020" stroke-width="2"/><path d="M6.500 9.900h9" stroke="#c01848" stroke-width="2"/></symbol>
<symbol id="b-auth" viewBox="0 0 16 15"><path d="M.5 1.500h6l2 2v10.500h-8z" fill="#fff" stroke="#3f5f9e" stroke-width=".9"/><path d="M2 5h5M2 7h5M2 9h5M2 11h5M2 12.800h5" stroke="#3f5f9e" stroke-width=".8"/><circle cx="12" cy="2.500" r="1.900" fill="#8fb0e0" stroke="#1f3f7e" stroke-width=".9"/><path d="M9.500 5.500h5v4.500h-1v4.500h-3V10h-1z" fill="#8fb0e0" stroke="#1f3f7e" stroke-width=".9" stroke-linejoin="round"/></symbol>
<symbol id="b-comm" viewBox="0 0 16 15"><path d="M.8 3v9.500c0 1 1.700 1.700 3.700 1.700s3.700-.7 3.700-1.700V3" fill="#ffdf50" stroke="#c99a1a" stroke-width=".9"/><ellipse cx="4.500" cy="3" rx="3.700" ry="1.700" fill="#fff0a0" stroke="#c99a1a" stroke-width=".9"/><circle cx="12" cy="2.500" r="1.900" fill="#8fb0e0" stroke="#1f3f7e" stroke-width=".9"/><path d="M9.500 5.500h5v4.500h-1v4.500h-3V10h-1z" fill="#8fb0e0" stroke="#1f3f7e" stroke-width=".9" stroke-linejoin="round"/></symbol>
<symbol id="b-plus" viewBox="0 0 16 16"><path d="M5.500 1h5v4.500H15v5h-4.500V15h-5v-4.500H1v-5h4.500z" fill="#c3d94e" stroke="#7d972a" stroke-width="1"/></symbol>
</defs>
</svg>
<svg width="0" height="0" style="position:absolute"><defs>
<symbol id="k-opt" viewBox="0 0 13 12"><path d="M1 2h3.500l4 8.500H12M8 2h4" fill="none" stroke="currentColor" stroke-width="1.100"/></symbol>
<symbol id="k-cmd" viewBox="0 0 13 12"><path d="M4.500 4.500h4v4h-4zM4.500 4.500V3a1.500 1.500 0 1 0-1.500 1.500zM8.500 4.500H10A1.500 1.500 0 1 0 8.500 3zM8.500 8.500V10A1.500 1.500 0 1 0 10 8.500zM4.500 8.500H3A1.500 1.500 0 1 0 4.500 10z" fill="none" stroke="currentColor" stroke-width="1.050"/></symbol>
<symbol id="k-sh" viewBox="0 0 13 12"><path d="M6.500 1L1.500 6.500h2.800V11h4.400V6.500h2.800z" fill="none" stroke="currentColor" stroke-width="1.050" stroke-linejoin="round"/></symbol>
<symbol id="k-dn" viewBox="0 0 9 12"><path d="M4.500 1v9.500M1.500 7.500l3 3 3-3" fill="none" stroke="currentColor" stroke-width="1.100"/></symbol>
<symbol id="k-del" viewBox="0 0 15 12"><path d="M1 1.500h9l4 4.500-4 4.500H1z" fill="none" stroke="currentColor" stroke-width="1.100" stroke-linejoin="round"/><path d="M3.500 3.800l4.400 4.400M7.900 3.800L3.500 8.200" stroke="currentColor" stroke-width="1.100"/></symbol>
</defs></svg>
<div id="titlebar" class="abs">
<div class="tl" style="left:3px;background:#fc5b57;border:.5px solid #df4240"></div>
<div class="tl" style="left:23px;background:#fdbc40;border:.5px solid #dea032"></div>
<div class="tl" style="left:43px;background:#34c84a;border:.5px solid #27a73a"></div>
<svg class="abs" style="left:538px;top:2px" width="13" height="16"><path d="M.5.500h8l3.500 3.500v11.500h-11.500z" fill="#fff" stroke="#9a9a9a" stroke-width=".9"/><path d="M8.500.5v3.500h3.500" fill="#eee" stroke="#9a9a9a" stroke-width=".8"/><path d="M7.500 6v5c0 1.500-1.800 1.700-2.600.6" fill="none" stroke="#222" stroke-width="1.300"/><rect x="6.800" y="3.800" width="1.400" height="1.300" fill="#222"/></svg>
<span class="t ttl" style="left:557.6px;letter-spacing:0.255px">okta - </span>
<span class="t ttl" style="left:596.9px;letter-spacing:0.354px">Back-to-the-Future-Servlet-Login-in-2019</span>
<span class="t ttl" style="left:857.2px;letter-spacing:-0.834px">_STARTER</span>
<span class="t ttl" style="left:919.8px;letter-spacing:0.416px">/src/main</span>
<span class="t ttl" style="left:978.3px;letter-spacing:0.557px">/java</span>
<span class="t ttl" style="left:1009.6px;letter-spacing:-0.614px">/com</span>
<span class="t ttl" style="left:1036.4px;letter-spacing:0.04px">/example</span>
<span class="t ttl" style="left:1091.5px;letter-spacing:0.173px">/joy</span>
<span class="t ttl" style="left:1113.2px;letter-spacing:0.227px">/servletLogin</span>
<span class="t ttl" style="left:1192.7px;letter-spacing:-0.124px">/Application.java</span>
<span class="t ttl" style="left:1288.9px;letter-spacing:-0.098px"> - Eclipse IDE</span>
</div>
<div id="toolbar" class="abs" style="left:0;top:20px;width:1444px;height:32px;background:linear-gradient(#f1f1f1 0,#ececec 2px,#e9e9e9)">
<svg class="abs" style="left:4px;top:8.2px" width="15.5" height="15"><use href="#t-new"/></svg>
<svg class="abs" style="left:22.5px;top:15px" width="5" height="4"><path d="M0 .3h5L2.500 3.800z" fill="#111"/></svg>
<svg class="abs" style="left:34.2px;top:10px" width="14.5" height="13.5"><use href="#t-save"/></svg>
<svg class="abs" style="left:55.8px;top:9.5px" width="15" height="14"><use href="#t-saveall"/></svg>
<div class="abs" style="left:75px;top:7px;width:1px;height:16px;background:repeating-linear-gradient(#d6d0bd 0 1px,transparent 1px 3px)"></div>
<svg class="abs" style="left:83.5px;top:8.8px" width="14" height="14.5"><use href="#t-mon"/></svg>
<div class="abs" style="left:102px;top:7px;width:1px;height:16px;background:repeating-linear-gradient(#d6d0bd 0 1px,transparent 1px 3px)"></div>
<div class="abs" style="left:106px;top:5px;width:22px;height:22px;background:#dadada;border:1px solid #c3c3c3"></div>
<svg class="abs" style="left:109.7px;top:8.2px" width="15" height="15"><use href="#t-skip"/></svg>
<div class="abs" style="left:131px;top:5px;width:1px;height:22px;background:#d2d2d2"></div>
<svg class="abs" style="left:138px;top:9.2px" width="15" height="14.5"><use href="#t-resume"/></svg>
<svg class="abs" style="left:160px;top:9.2px" width="15" height="14.5"><use href="#t-pause"/></svg>
<svg class="abs" style="left:181.5px;top:9.3px" width="15" height="14.5"><use href="#t-stop"/></svg>
<svg class="abs" style="left:203.5px;top:9px" width="14.5" height="14.5"><use href="#t-disc"/></svg>
<svg class="abs" style="left:225px;top:9.5px" width="18" height="14.5"><use href="#t-stepin"/></svg>
<svg class="abs" style="left:247.5px;top:9.5px" width="15" height="14.5"><use href="#t-stepov"/></svg>
<svg class="abs" style="left:270px;top:9.5px" width="15" height="14.5"><use href="#t-stepret"/></svg>
<div class="abs" style="left:291px;top:5px;width:1px;height:22px;background:#d2d2d2"></div>
<svg class="abs" style="left:297.5px;top:8.7px" width="15" height="14.6"><use href="#t-drop"/></svg>
<svg class="abs" style="left:318.7px;top:9px" width="16.3" height="14"><use href="#t-filt"/></svg>
<div class="abs" style="left:339.5px;top:7px;width:1px;height:16px;background:repeating-linear-gradient(#d6d0bd 0 1px,transparent 1px 3px)"></div>
<svg class="abs" style="left:346.7px;top:9px" width="15" height="14.3"><use href="#t-d1"/></svg>
<svg class="abs" style="left:371px;top:8.3px" width="13" height="14.2"><use href="#t-d2"/></svg>
<svg class="abs" style="left:391.7px;top:9.8px" width="13.3" height="13"><use href="#t-d3"/></svg>
<svg class="abs" style="left:412.5px;top:8.8px" width="15.5" height="13.5"><use href="#t-d4"/></svg>
<svg class="abs" style="left:434.5px;top:9px" width="14" height="14.5"><use href="#t-d5"/></svg>
<svg class="abs" style="left:459.5px;top:11.5px" width="8.5" height="11"><use href="#t-pil"/></svg>
<div class="abs" style="left:476px;top:7px;width:1px;height:16px;background:repeating-linear-gradient(#d6d0bd 0 1px,transparent 1px 3px)"></div>
<svg class="abs" style="left:483.5px;top:8.8px" width="15" height="15"><use href="#m-bug"/></svg>
<svg class="abs" style="left:502.5px;top:15px" width="5" height="4"><path d="M0 .3h5L2.500 3.800z" fill="#111"/></svg>
<svg class="abs" style="left:514px;top:9.2px" width="16" height="16"><use href="#m-run"/></svg>
<svg class="abs" style="left:532.5px;top:15px" width="5" height="4"><path d="M0 .3h5L2.500 3.800z" fill="#111"/></svg>
<svg class="abs" style="left:544px;top:9px" width="15.5" height="15.5"><use href="#m-cov"/></svg>
<svg class="abs" style="left:562.5px;top:15px" width="5" height="4"><path d="M0 .3h5L2.500 3.800z" fill="#111"/></svg>
<svg class="abs" style="left:573px;top:7.5px" width="16" height="15.5"><use href="#t-extrun"/></svg>
<svg class="abs" style="left:592.5px;top:15px" width="5" height="4"><path d="M0 .3h5L2.500 3.800z" fill="#111"/></svg>
<div class="abs" style="left:601px;top:7px;width:1px;height:16px;background:repeating-linear-gradient(#d6d0bd 0 1px,transparent 1px 3px)"></div>
<svg class="abs" style="left:607.5px;top:8.5px" width="16.3" height="14.5"><use href="#t-opent"/></svg>
<svg class="abs" style="left:629.8px;top:9.5px" width="15.8" height="13.5"><use href="#t-opent2"/></svg>
<svg class="abs" style="left:651.5px;top:8.7px" width="16" height="15"><use href="#t-pen"/></svg>
<svg class="abs" style="left:671px;top:15px" width="5" height="4"><path d="M0 .3h5L2.500 3.800z" fill="#111"/></svg>
<div class="abs" style="left:680px;top:7px;width:1px;height:16px;background:repeating-linear-gradient(#d6d0bd 0 1px,transparent 1px 3px)"></div>
<svg class="abs" style="left:687.5px;top:8.7px" width="14.3" height="14.6"><use href="#t-annn"/></svg>
<svg class="abs" style="left:706px;top:15px" width="5" height="4"><path d="M0 .3h5L2.500 3.800z" fill="#9a9a9a"/></svg>
<svg class="abs" style="left:716px;top:8.2px" width="14.3" height="14.6"><use href="#t-annp"/></svg>
<svg class="abs" style="left:736px;top:15px" width="5" height="4"><path d="M0 .3h5L2.500 3.800z" fill="#9a9a9a"/></svg>
<svg class="abs" style="left:746.5px;top:9.9px" width="16.5" height="12"><use href="#t-lastedit"/></svg>
<svg class="abs" style="left:769.7px;top:10px" width="14" height="12"><use href="#t-back"/></svg>
<svg class="abs" style="left:788px;top:15px" width="5" height="4"><path d="M0 .3h5L2.500 3.800z" fill="#111"/></svg>
<svg class="abs" style="left:800px;top:10px" width="14" height="12"><use href="#t-fwd"/></svg>
<svg class="abs" style="left:818px;top:15px" width="5" height="4"><path d="M0 .3h5L2.500 3.800z" fill="#9a9a9a"/></svg>
</div>
<div id="left" class="panel" style="left:-1px;top:52px;width:476px;height:945px;border-radius:0 7px 0 0;border:1px solid #c6c6c3"></div>
<div id="editor" class="panel" style="left:479px;top:52px;width:931px;height:547px;border-radius:7px;border:none"></div>
<div id="right" class="panel" style="left:1414px;top:52px;width:40px;height:547px;border-radius:7px 0 0 7px;border:none"></div>
<div id="bottom" class="panel" style="left:479px;top:603px;width:980px;height:400px;border-radius:7px 0 0 0;border:none"></div>
<div class="abs" style="left:0;top:53px;width:474px;height:25px;background:linear-gradient(#f3f3f3,#dedede);border-bottom:1px solid #b3bdd0;border-radius:0 6px 0 0"></div>
<div class="abs" style="left:62px;top:52px;width:124px;height:26px;background:#fff;border:1px solid #b9c0cf;border-bottom:none;border-radius:6px 6px 0 0"></div>
<svg class="abs" style="left:1px;top:58px" width="16" height="16"><use href="#m-bug"/></svg>
<span class="t lt" style="left:21.500px;letter-spacing:-.18px">Debug</span>
<svg class="abs" style="left:64px;top:57px" width="16" height="16"><use href="#b-pe"/></svg>
<span class="t lt" style="left:85px;letter-spacing:.07px">Project Explor</span>
<svg class="abs" style="left:167px;top:61px" width="10" height="10"><use href="#b-x"/></svg>
<svg class="abs" style="left:191px;top:59.5px" width="14" height="12"><use href="#b-srv"/></svg>
<span class="t lt" style="left:209px;letter-spacing:-.09px">Servers</span>
<svg class="abs" style="left:257px;top:58px" width="12" height="16"><use href="#b-th"/></svg>
<span class="t lt" style="left:278.500px;letter-spacing:0">Type Hierarch</span>
<span class="t" style="left:363px;top:58px;font:bold 16px 'Liberation Serif',serif;color:#2e8b4e">J</span><span class="t" style="left:370.500px;top:63.500px;font:bold 10px 'Liberation Serif',serif;color:#d8344a">U</span>
<span class="t lt" style="left:382.500px;letter-spacing:0">JUnit</span>
<svg class="abs" style="left:428.5px;top:60px" width="11" height="5"><use href="#b-min"/></svg>
<svg class="abs" style="left:450.5px;top:60px" width="12" height="11"><use href="#b-max"/></svg>
<svg class="abs" style="left:374.5px;top:84.5px" width="14" height="14"><use href="#b-coll"/></svg>
<div class="abs" style="left:392px;top:80px;width:22px;height:22px;background:#e6e6e6;border:1px solid #cbcbcb"></div>
<svg class="abs" style="left:394.5px;top:83px" width="17" height="16"><use href="#b-link"/></svg>
<div class="abs" style="left:417px;top:80px;width:1px;height:22px;background:#dcdcdc"></div>
<svg class="abs" style="left:424.5px;top:84px" width="14" height="14"><use href="#t-d3g"/></svg>
<svg class="abs" style="left:453.5px;top:85.5px" width="11" height="7"><use href="#b-vm"/></svg>
<div id="tree" class="abs" style="left:0;top:0;width:472px;height:991px;overflow:hidden">
<div class="tr" style="top:102px;">
<svg class="abs" style="left:8px;top:3.500px" width="7" height="9"><path d="M0 0L7 4.500L0 9Z" fill="#7d7d7d"/></svg>
<svg class="abs" style="left:18px;top:0" width="17" height="17"><use href="#i-mj"/></svg>
<span class="tx" style="left:36.5px;letter-spacing:0.396px">Back-to-the-Future-Servlet-Login-in-2019<span class="dec" style="letter-spacing:0.337px"> [Back-to-the-Future-Servlet-Login-in-2019 master]</span></span></div>
<div class="tr" style="top:119px;">
<svg class="abs" style="left:7px;top:4px" width="9" height="7"><path d="M0 0L9 0L4.500 7Z" fill="#7d7d7d"/></svg>
<svg class="abs" style="left:18px;top:0" width="17" height="17"><use href="#i-mj"/></svg>
<span class="tx" style="left:36.5px;letter-spacing:0.215px">Back-to-the-Future-Servlet-Login-in-2019_STARTER<span class="dec" style="letter-spacing:0.372px"> [Back-to-the-Future-Servlet-Login-in-2019_STARTER StarterBranch]</span></span></div>
<div class="tr" style="top:136px;">
<svg class="abs" style="left:23px;top:4px" width="9" height="7"><path d="M0 0L9 0L4.500 7Z" fill="#7d7d7d"/></svg>
<svg class="abs" style="left:34px;top:0" width="17" height="17"><use href="#i-srcf"/></svg>
<span class="tx" style="left:52.5px;letter-spacing:0.058px">src/main/java</span></div>
<div class="tr" style="top:153px;">
<svg class="abs" style="left:39px;top:4px" width="9" height="7"><path d="M0 0L9 0L4.500 7Z" fill="#7d7d7d"/></svg>
<svg class="abs" style="left:50px;top:0" width="17" height="17"><use href="#i-pkg"/></svg>
<span class="tx" style="left:68.5px;letter-spacing:0.102px">com.example.joy.servletLogin</span></div>
<div class="tr" style="top:170px;background:#0b6cd5;height:16px;top:170px;">
<svg class="abs" style="left:56px;top:3.500px" width="7" height="9"><path d="M0 0L7 4.500L0 9Z" fill="#fff"/></svg>
<svg class="abs" style="left:66px;top:0" width="17" height="17"><use href="#i-jfile"/></svg>
<span class="tx" style="left:84.5px;letter-spacing:0.075px;color:#fff">Application.java</span></div>
<div class="tr" style="top:187px;">
<svg class="abs" style="left:24px;top:3.500px" width="7" height="9"><path d="M0 0L7 4.500L0 9Z" fill="#7d7d7d"/></svg>
<svg class="abs" style="left:34px;top:0" width="17" height="17"><use href="#i-lib"/></svg>
<span class="tx" style="left:52.5px;letter-spacing:-0.117px">JRE System Library [JavaSE-1.8]</span></div>
<div class="tr" style="top:204px;">
<svg class="abs" style="left:24px;top:3.500px" width="7" height="9"><path d="M0 0L7 4.500L0 9Z" fill="#7d7d7d"/></svg>
<svg class="abs" style="left:34px;top:0" width="17" height="17"><use href="#i-lib"/></svg>
<span class="tx" style="left:52.5px;letter-spacing:0.188px">Maven Dependencies</span></div>
<div class="tr" style="top:221px;">
<svg class="abs" style="left:24px;top:3.500px" width="7" height="9"><path d="M0 0L7 4.500L0 9Z" fill="#7d7d7d"/></svg>
<svg class="abs" style="left:34px;top:0" width="17" height="17"><use href="#i-srcf"/></svg>
<span class="tx" style="left:52.5px;letter-spacing:0.103px">src/main/resources</span></div>
<div class="tr" style="top:238px;">
<svg class="abs" style="left:24px;top:3.500px" width="7" height="9"><path d="M0 0L7 4.500L0 9Z" fill="#7d7d7d"/></svg>
<svg class="abs" style="left:34px;top:0" width="17" height="17"><use href="#i-fold2"/></svg>
<span class="tx" style="left:52.5px;letter-spacing:-0.11px">src</span></div>
<div class="tr" style="top:255px;">
<svg class="abs" style="left:24px;top:3.500px" width="7" height="9"><path d="M0 0L7 4.500L0 9Z" fill="#7d7d7d"/></svg>
<svg class="abs" style="left:34px;top:0" width="17" height="17"><use href="#i-fold"/></svg>
<span class="tx" style="left:52.5px;letter-spacing:0.182px">target</span></div>
<div class="tr" style="top:272px;">
<svg class="abs" style="left:34px;top:0" width="17" height="17"><use href="#i-pom"/></svg>
<span class="tx" style="left:52.5px;letter-spacing:0.007px">pom.xml</span></div>
<div class="tr" style="top:289px;">
<svg class="abs" style="left:34px;top:0" width="17" height="17"><use href="#i-md"/></svg>
<span class="tx" style="left:52.5px;letter-spacing:-0.458px">README.md</span></div>
<div class="tr" style="top:306px;">
<svg class="abs" style="left:8px;top:3.500px" width="7" height="9"><path d="M0 0L7 4.500L0 9Z" fill="#7d7d7d"/></svg>
<svg class="abs" style="left:18px;top:0" width="17" height="17"><use href="#i-mj2"/></svg>
<span class="tx" style="left:36.5px;letter-spacing:0.201px">Back-to-the-Future-Servlet-Login-in-2019-Sessions</span></div>
</div>
<div class="abs" style="left:479px;top:53px;width:931px;height:25px;background:linear-gradient(#ebebeb,#fff 90%);border-radius:6px 6px 0 0;box-shadow:0 -1px 0 #fff"></div>
<div class="abs" style="left:1154px;top:52px;width:127px;height:26px;background:linear-gradient(#e8ebf2,#fff 80%);border:1px solid #d9dce4;border-bottom:none;border-radius:6px 6px 0 0"></div>
<svg class="abs" style="left:486.5px;top:59px;opacity:.6" width="12" height="15"><use href="#b-jf"/></svg>
<span class="t et" style="left:504.5px;color:#6b6b6b;letter-spacing:0.06px">AuthenticationS</span>
<svg class="abs" style="left:619.5px;top:59px;opacity:.6" width="12" height="15"><use href="#b-html"/></svg>
<span class="t et" style="left:637px;color:#6b6b6b;letter-spacing:0.24px">forgot-password</span>
<svg class="abs" style="left:756.5px;top:59px;opacity:.6" width="12" height="15"><use href="#b-jf"/></svg>
<span class="t et" style="left:774px;color:#6b6b6b;letter-spacing:0.14px">AuthenticationA</span>
<svg class="abs" style="left:889.5px;top:59px;opacity:.6" width="12" height="15"><use href="#b-jf"/></svg>
<span class="t et" style="left:907px;color:#6b6b6b;letter-spacing:0.14px">AuthenticationS</span>
<svg class="abs" style="left:1022.5px;top:59px;opacity:.6" width="12" height="15"><use href="#b-html"/></svg>
<span class="t et" style="left:1040.5px;color:#6b6b6b;letter-spacing:0.24px">unsupported-sta</span>
<svg class="abs" style="left:1160px;top:59px" width="12" height="15"><use href="#b-jf"/></svg>
<span class="t et" style="left:1178px;color:#000;letter-spacing:0.11px">Application.jav</span>
<svg class="abs" style="left:1262px;top:61px" width="10" height="10"><use href="#b-x"/></svg>
<svg class="abs" style="left:1295px;top:59px" width="9" height="6"><path d="M.5.500L3 3 .5 5.500M4.500.5L7 3 4.500 5.500" fill="none" stroke="#111" stroke-width="1.200"/></svg>
<span class="t" style="left:1302.500px;top:64px;font-size:10px;color:#333">5</span>
<svg class="abs" style="left:1363.5px;top:60px" width="11" height="5"><use href="#b-min"/></svg>
<svg class="abs" style="left:1385.5px;top:60px" width="12" height="11"><use href="#b-max"/></svg>
<div class="abs" style="left:519px;top:581px;width:861px;height:15px;background:#fafafa;border-top:1px solid #eee;border-bottom:1px solid #f0f0f0"></div>
<div class="abs" style="left:1380px;top:80px;width:14px;height:516px;background:#fafafa;border:1px solid #eee"></div>
<div class="abs" style="left:1383px;top:83px;width:8px;height:492px;background:#c1c1c1;border-radius:4px"></div>
<div class="abs" style="left:521px;top:80px;width:858px;height:14px;background:#e8f2fe"></div>
<div class="ln" style="top:80px">2</div>
<svg class="abs" style="left:509.200px;top:82.2px" width="9" height="9"><circle cx="4.500" cy="4.500" r="4" fill="#e4eaf4" stroke="#b4bdd0" stroke-width="1"/><path d="M2.300 4.500H6.700M4.500 2.300V6.700" stroke="#18223f" stroke-width="1.300" fill="none"/></svg>
<div class="cl" style="top:80px"><span class="g"> <span class=as>*</span> Copyright 2019–Present <span class="sq">Okta</span>, Inc.</span><span class="fbox"></span></div>
<div class="ln" style="top:94px">16</div>
<div class="ln" style="top:108px">17</div>
<div class="cl" style="top:108px"><span class="k">package</span> com.example.joy.servletLogin;</div>
<div class="ln" style="top:122px">18</div>
<div class="ln" style="top:136px">19</div>
<div class="ln" style="top:150px">20</div>
<svg class="abs" style="left:509.200px;top:152.2px" width="9" height="9"><circle cx="4.500" cy="4.500" r="4" fill="#e4eaf4" stroke="#b4bdd0" stroke-width="1"/><path d="M2.300 4.500H6.700M4.500 2.300V6.700" stroke="#18223f" stroke-width="1.300" fill="none"/></svg>
<div class="cl" style="top:150px"><span class="k">import</span> org.eclipse.jetty.annotations.AnnotationConfiguration;<span class="fbox"></span></div>
<div class="ln" style="top:164px">29</div>
<div class="ln" style="top:178px">30</div>
<svg class="abs" style="left:509.200px;top:180.2px" width="9" height="9"><circle cx="4.500" cy="4.500" r="4" fill="#fff" stroke="#a8aebb" stroke-width="1"/><path d="M2.300 4.500H6.700" stroke="#707888" stroke-width="1.100" fill="none"/></svg>
<div class="cl" style="top:178px"><span class="c">/<span class=as>*</span><span class=as>*</span></span></div>
<div class="ln" style="top:192px">31</div>
<div class="cl" style="top:192px"><span class="c"> <span class=as>*</span> Simple embedded web application to make running this sample easier. <span class="sq">Servlet</span> and Context Listener are registered</span></div>
<div class="ln" style="top:206px">32</div>
<div class="cl" style="top:206px"><span class="c"> <span class=as>*</span> via annotations and should work in a traditional WAR file <span class="sq">app</span> the same way.</span></div>
<div class="ln" style="top:220px">33</div>
<div class="cl" style="top:220px"><span class="c"> <span class=as>*</span>/</span></div>
<div class="ln" style="top:234px">34</div>
<div class="cl" style="top:234px"><span class="k">public</span> <span class="k">class</span> Application {</div>
<div class="ln" style="top:248px">35</div>
<div class="ln" style="top:262px">36</div>
<svg class="abs" style="left:509.200px;top:264.2px" width="9" height="9"><circle cx="4.500" cy="4.500" r="4" fill="#fff" stroke="#a8aebb" stroke-width="1"/><path d="M2.300 4.500H6.700" stroke="#707888" stroke-width="1.100" fill="none"/></svg>
<div class="cl" style="top:262px">    <span class="k">public</span> <span class="k">static</span> <span class="k">void</span> main(String[] <span class="v">args</span>) <span class="k">throws</span> Exception {</div>
<div class="ln" style="top:276px">37</div>
<div class="ln" style="top:290px">38</div>
<div class="cl" style="top:290px">        WebAppContext <span class="v">webapp</span> = <span class="k">new</span> WebAppContext();</div>
<div class="ln" style="top:304px">39</div>
<div class="cl" style="top:304px">        <span class="v">webapp</span>.setBaseResource(Resource.<span class="i">newResource</span>(<span class="k">new</span> File( <span class="s">&quot;src/main/webapp&quot;</span>)));</div>
<div class="ln" style="top:318px">40</div>
<div class="cl" style="top:318px">        <span class="v">webapp</span>.setContextPath(<span class="s">&quot;/&quot;</span>);</div>
<div class="ln" style="top:332px">41</div>
<div class="cl" style="top:332px">        <span class="v">webapp</span>.setWelcomeFiles(<span class="k">new</span> String[]{<span class="s">&quot;index.jsp&quot;</span>});</div>
<div class="ln" style="top:346px">42</div>
<div class="ln" style="top:360px">43</div>
<div class="cl" style="top:360px">        <span class="v">webapp</span>.setParentLoaderPriority(<span class="k">true</span>);</div>
<div class="ln" style="top:374px">44</div>
<div class="cl" style="top:374px">        <span class="v">webapp</span>.setConfigurations(<span class="k">new</span> Configuration[] {</div>
<div class="ln" style="top:388px">45</div>
<div class="cl" style="top:388px">            <span class="k">new</span> AnnotationConfiguration(),</div>
<div class="ln" style="top:402px">46</div>
<div class="cl" style="top:402px">            <span class="k">new</span> WebInfConfiguration(),</div>
<div class="ln" style="top:416px">47</div>
<div class="cl" style="top:416px">            <span class="k">new</span> WebXmlConfiguration()</div>
<div class="ln" style="top:430px">48</div>
<div class="cl" style="top:430px">        });</div>
<div class="ln" style="top:444px">49</div>
<div class="ln" style="top:458px">50</div>
<div class="cl" style="top:458px"><span class="g">        // scan everything for annotations, <span class="sq">jstl</span>, web fragments, etc</span></div>
<div class="ln" style="top:472px">51</div>
<div class="cl" style="top:472px">        <span class="v">webapp</span>.setAttribute(<span class="s">&quot;org.eclipse.jetty.server.webapp.ContainerIncludeJarPattern&quot;</span>, <span class="s">&quot;.<span class=as>*</span>&quot;</span>);</div>
<div class="ln" style="top:486px">52</div>
<div class="ln" style="top:500px">53</div>
<div class="cl" style="top:500px">        Server <span class="v">server</span> = <span class="k">new</span> Server(8080);</div>
<div class="ln" style="top:514px">54</div>
<div class="cl" style="top:514px">        <span class="v">server</span>.setHandler(<span class="v">webapp</span>);</div>
<div class="ln" style="top:528px">55</div>
<div class="cl" style="top:528px">        <span class="v">server</span>.start();</div>
<div class="ln" style="top:542px">56</div>
<div class="cl" style="top:542px">        <span class="v">server</span>.join();</div>
<div class="ln" style="top:556px">57</div>
<div class="cl" style="top:556px">    }</div>
<div class="ln" style="top:570px">58</div>
<div class="cl" style="top:570px">}</div>
<div class="abs" style="left:1414px;top:53px;width:30px;height:25px;background:linear-gradient(#ebebeb,#fff 90%);border-radius:6px 0 0 0;box-shadow:0 -1px 0 #fff"></div>
<span class="t" style="left:1418px;top:60px;font-size:10.500px;color:#9aa5b8;letter-spacing:.3px">(x)=</span><span class="t" style="left:1440px;top:59px;font-size:12px;color:#b08a6a">V</span>
<div class="abs" style="left:1417px;top:581px;width:27px;height:15px;background:#fafafa;border-top:1px solid #e6e6e6;border-bottom:1px solid #eee"></div>
<div class="abs" style="left:1417px;top:80px;width:27px;height:1px;background:#e0e0e0"></div>
<span class="t" style="left:1419.500px;top:83px;font-size:11.500px;color:#111">Name</span>
<div class="abs" style="left:1417px;top:96px;width:27px;height:1px;background:#d4d4d4"></div>
<div class="abs" style="left:1417px;top:114px;width:27px;height:17px;background:#f2f2f2"></div>
<div class="abs" style="left:1417px;top:148px;width:27px;height:17px;background:#f2f2f2"></div>
<div class="abs" style="left:1417px;top:182px;width:27px;height:17px;background:#f2f2f2"></div>
<div class="abs" style="left:1417px;top:216px;width:27px;height:17px;background:#f2f2f2"></div>
<div class="abs" style="left:1417px;top:250px;width:27px;height:17px;background:#f2f2f2"></div>
<div class="abs" style="left:1417px;top:284px;width:27px;height:17px;background:#f2f2f2"></div>
<div class="abs" style="left:1417px;top:318px;width:27px;height:17px;background:#f2f2f2"></div>
<div class="abs" style="left:1417px;top:352px;width:27px;height:17px;background:#f2f2f2"></div>
<div class="abs" style="left:1417px;top:386px;width:27px;height:17px;background:#f2f2f2"></div>
<div class="abs" style="left:1417px;top:420px;width:27px;height:17px;background:#f2f2f2"></div>
<span class="t" style="left:1437px;top:97px;font-size:9px;color:#3f6fae">x+</span><span class="t" style="left:1437px;top:105px;font-size:8px;color:#3f6fae">=?</span>
<span class="t" style="left:1437px;top:114px;font-size:9px;color:#3f6fae">x+</span><span class="t" style="left:1437px;top:122px;font-size:8px;color:#3f6fae">=?</span>
<span class="t" style="left:1437px;top:131px;font-size:9px;color:#3f6fae">x+</span><span class="t" style="left:1437px;top:139px;font-size:8px;color:#3f6fae">=?</span>
<span class="t" style="left:1437px;top:148px;font-size:9px;color:#3f6fae">x+</span><span class="t" style="left:1437px;top:156px;font-size:8px;color:#3f6fae">=?</span>
<span class="t" style="left:1437px;top:165px;font-size:9px;color:#3f6fae">x+</span><span class="t" style="left:1437px;top:173px;font-size:8px;color:#3f6fae">=?</span>
<svg class="abs" style="left:1437px;top:184px" width="16" height="16"><use href="#b-plus"/></svg>
<div class="abs" style="left:1417px;top:431px;width:27px;height:5px;background:#e8e8e8"></div>
<div class="abs" style="left:479px;top:604px;width:965px;height:25px;background:linear-gradient(#e9e9e9,#fff 90%);border-radius:6px 0 0 0;box-shadow:0 -1px 0 #fff"></div>
<div class="abs" style="left:1040px;top:603px;width:108px;height:26px;background:linear-gradient(#e6e9f0,#fff 80%);border:1px solid #d9dce4;border-bottom:none;border-radius:5px 5px 0 0"></div>
<svg class="abs" style="left:486px;top:609.5px;opacity:.6" width="13.5" height="13.5"><use href="#b-con"/></svg>
<span class="t bt" style="left:504.5px;color:#6e6e6e;letter-spacing:-0.16px">Console</span>
<svg class="abs" style="left:555.5px;top:609px;opacity:.6" width="15" height="15"><use href="#b-prob"/></svg>
<span class="t bt" style="left:576.5px;color:#6e6e6e;letter-spacing:-0.16px">Problems</span>
<svg class="abs" style="left:637px;top:609px;opacity:.6" width="12" height="15"><use href="#b-dsh"/></svg>
<span class="t bt" style="left:655.5px;color:#6e6e6e;letter-spacing:-0.04px">Debug Shell</span>
<svg class="abs" style="left:727.5px;top:609px;opacity:.6" width="16" height="15"><use href="#t-pen"/></svg>
<span class="t bt" style="left:748px;color:#6e6e6e;letter-spacing:-0.12px">Search</span>
<svg class="abs" style="left:795px;top:609.5px;opacity:.6" width="14" height="14"><use href="#b-cov"/></svg>
<span class="t bt" style="left:814.5px;color:#6e6e6e;letter-spacing:-0.17px">Coverage</span>
<svg class="abs" style="left:875.5px;top:609px;opacity:.6" width="12" height="15"><use href="#b-hist"/></svg>
<span class="t bt" style="left:893px;color:#6e6e6e;letter-spacing:0.1px">History</span>
<svg class="abs" style="left:940px;top:609.5px;opacity:.6" width="16" height="15"><use href="#b-call"/></svg>
<span class="t bt" style="left:961px;color:#6e6e6e;letter-spacing:-0.03px">Call Hierarchy</span>
<svg class="abs" style="left:1043px;top:610px" width="16" height="15"><use href="#b-git"/></svg>
<span class="t bt" style="left:1063.5px;color:#000;letter-spacing:0px">Git Staging</span>
<svg class="abs" style="left:1128.5px;top:612px" width="10" height="10"><use href="#b-x"/></svg>
<span class="t" id="ghead" style="right:428px;top:640px">okta &gt; Back-to-the-Future-Servlet-Login-in-2019_STARTER [StarterBranch]</span>
<div class="abs" style="left:480px;top:661px;width:964px;height:2px;background:#e9e9e9"></div>
<div class="abs" style="left:484px;top:669px;width:710px;height:2px;background:#f4f4f4;border-radius:2px"></div>
<div class="abs" style="left:1199px;top:669px;width:246px;height:2px;background:#f4f4f4;border-radius:2px"></div>
<span class="t bl" style="left:495px;top:677px">Unstaged Changes (0)</span>
<svg class="abs" style="left:1126.5px;top:675.5px" width="14" height="14"><use href="#b-add"/></svg>
<svg class="abs" style="left:1147.5px;top:673.5px" width="16" height="16"><use href="#b-addall"/></svg>
<svg class="abs" style="left:1170px;top:676px" width="16" height="14"><use href="#b-sort"/></svg>
<div class="abs box" style="left:493px;top:696px;width:696px;height:147px"></div>
<div class="abs" style="left:484px;top:847px;width:710px;height:2px;background:#f4f4f4;border-radius:2px"></div>
<span class="t bl" style="left:495px;top:855px;letter-spacing:.2px">Staged Changes (0)</span>
<div class="abs" style="left:1149px;top:858px;width:13px;height:5px;background:#f2b9bb;border:1px solid #e6a4a8;border-radius:1px"></div>
<div class="abs" style="left:1170px;top:855px;width:10px;height:4px;background:#f2b9bb;border:1px solid #e6a4a8;border-radius:1px"></div>
<div class="abs" style="left:1175px;top:860px;width:10px;height:4px;background:#f2b9bb;border:1px solid #e6a4a8;border-radius:1px"></div>
<div class="abs box" style="left:493px;top:874px;width:696px;height:130px"></div>
<span class="t bl" style="left:1206.500px;top:677px;letter-spacing:.1px">Commit Message</span>
<div class="abs box" style="left:1205px;top:696px;width:260px;height:237px"></div>
<svg class="abs" style="left:1204.5px;top:943px" width="16" height="15"><use href="#b-auth"/></svg>
<span class="t al" style="left:1224.500px;top:945.500px">Author:</span>
<div class="abs inp" style="left:1290.500px;top:942px"></div>
<span class="t av" style="left:1296px;top:946px">Joy Foster (IMac) &lt;joy@intelligentmachines.org&gt;</span>
<svg class="abs" style="left:1204.5px;top:969px" width="16" height="15"><use href="#b-comm"/></svg>
<span class="t al" style="left:1224.500px;top:971.500px;letter-spacing:.13px">Committer:</span>
<div class="abs inp" style="left:1290.500px;top:968px"></div>
<span class="t av" style="left:1296px;top:972px">Joy Foster (IMac) &lt;joy@intelligentmachines.org&gt;</span>
<div class="menu" style="left:154px;top:179px;width:264px">
<div class="mi"><span class="lb">New</span><span class="ar"></span></div>
<div class="sep"></div>
<div class="mi"><span class="lb">Open Type Hierarchy</span><span class="sc fk">F4</span></div>
<div class="mi"><span class="lb">Show In</span><span class="sc" style="right:auto;left:177px"><svg class="gl" width="14" height="12" viewBox="0 0 13 12" preserveAspectRatio="none"><use href="#k-opt"/></svg><svg class="gl" width="14" height="12" viewBox="0 0 13 12" preserveAspectRatio="none"><use href="#k-cmd"/></svg>W</span><span class="ar"></span></div>
<div class="mi"><span class="lb">Open</span><span class="sc fk">F3</span></div>
<div class="mi"><span class="lb">Open With</span><span class="ar"></span></div>
<div class="sep"></div>
<div class="mi ic"><svg class="mico" width="16" height="16"><use href="#m-copy"/></svg><span class="lb">Copy</span><span class="sc" style="right:auto;left:231px"><svg class="gl" width="14" height="12" viewBox="0 0 13 12" preserveAspectRatio="none"><use href="#k-cmd"/></svg>C</span></div>
<div class="mi ic"><svg class="mico" width="16" height="16"><use href="#m-copyq"/></svg><span class="lb">Copy Qualified Name</span></div>
<div class="mi ic"><svg class="mico" width="16" height="16"><use href="#m-paste"/></svg><span class="lb">Paste</span><span class="sc" style="right:auto;left:231px"><svg class="gl" width="14" height="12" viewBox="0 0 13 12" preserveAspectRatio="none"><use href="#k-cmd"/></svg>V</span></div>
<div class="mi ic"><svg class="mico" width="16" height="16"><use href="#m-del"/></svg><span class="lb">Delete</span><span class="sc" style="right:auto;left:245px"><svg class="gl" width="16" height="12" viewBox="0 0 15 12" preserveAspectRatio="none"><use href="#k-del"/></svg></span></div>
<div class="mi ic dis"><svg class="mico" width="16" height="16"><use href="#m-rem"/></svg><span class="lb">Remove from Context</span><span class="sc" style="right:auto;left:202px"><svg class="gl" width="14" height="12" viewBox="0 0 13 12" preserveAspectRatio="none"><use href="#k-opt"/></svg><svg class="gl" width="14" height="12" viewBox="0 0 13 12" preserveAspectRatio="none"><use href="#k-sh"/></svg><svg class="gl" width="14" height="12" viewBox="0 0 13 12" preserveAspectRatio="none"><use href="#k-cmd"/></svg><svg class="gl" width="9" height="12" viewBox="0 0 9 12" preserveAspectRatio="none"><use href="#k-dn"/></svg></span></div>
<div class="mi"><span class="lb">Build Path</span><span class="ar"></span></div>
<div class="mi"><span class="lb">Source</span><span class="sc" style="right:auto;left:177px"><svg class="gl" width="14" height="12" viewBox="0 0 13 12" preserveAspectRatio="none"><use href="#k-opt"/></svg><svg class="gl" width="14" height="12" viewBox="0 0 13 12" preserveAspectRatio="none"><use href="#k-cmd"/></svg>S</span><span class="ar"></span></div>
<div class="mi"><span class="lb">Refactor</span><span class="sc" style="right:auto;left:177px"><svg class="gl" width="14" height="12" viewBox="0 0 13 12" preserveAspectRatio="none"><use href="#k-opt"/></svg><svg class="gl" width="14" height="12" viewBox="0 0 13 12" preserveAspectRatio="none"><use href="#k-cmd"/></svg>T</span><span class="ar"></span></div>
<div class="sep"></div>
<div class="mi ic"><svg class="mico" width="16" height="16"><use href="#m-imp"/></svg><span class="lb">Import...</span></div>
<div class="mi ic"><svg class="mico" width="16" height="16"><use href="#m-exp"/></svg><span class="lb">Export...</span></div>
<div class="sep"></div>
<div class="mi ic"><svg class="mico" width="16" height="16"><use href="#m-refresh"/></svg><span class="lb">Refresh</span><span class="sc fk">F5</span></div>
<div class="sep"></div>
<div class="mi"><span class="lb">References</span><span class="ar"></span></div>
<div class="mi"><span class="lb">Declarations</span><span class="ar"></span></div>
<div class="sep"></div>
<div class="mi ic"><svg class="mico" width="16" height="16"><use href="#m-cov"/></svg><span class="lb">Coverage As</span><span class="ar"></span></div>
<div class="mi ic hl"><svg class="mico" width="16" height="16"><use href="#m-run"/></svg><span class="lb">Run As</span><span class="ar"></span></div>
<div class="mi ic"><svg class="mico" width="16" height="16"><use href="#m-bug"/></svg><span class="lb">Debug As</span><span class="ar"></span></div>
<div class="mi"><span class="lb">Profile As</span><span class="ar"></span></div>
<div class="mi"><span class="lb">Restore from Local History...</span></div>
<div class="mi"><span class="lb">Web Services</span><span class="ar"></span></div>
<div class="mi"><span class="lb">Team</span><span class="ar"></span></div>
<div class="mi"><span class="lb">Compare With</span><span class="ar"></span></div>
<div class="mi"><span class="lb">Replace With</span><span class="ar"></span></div>
<div class="mi ic"><svg class="mico" width="16" height="16"><use href="#m-check"/></svg><span class="lb">Validate</span></div>
<div class="sep"></div>
<div class="mi"><span class="lb">Properties</span><span class="sc" style="right:auto;left:231px"><svg class="gl" width="14" height="12" viewBox="0 0 13 12" preserveAspectRatio="none"><use href="#k-cmd"/></svg>I</span></div>
</div>
<div class="menu" style="left:418px;top:630px;width:235px">
<div class="mi ic"><svg class="mico" width="16" height="16"><use href="#m-ros"/></svg><span class="lb">1 Run on Server</span><span class="sc" style="right:auto;left:164px"><svg class="gl" width="14" height="12" viewBox="0 0 13 12" preserveAspectRatio="none"><use href="#k-opt"/></svg><svg class="gl" width="14" height="12" viewBox="0 0 13 12" preserveAspectRatio="none"><use href="#k-sh"/></svg>X R</span></div>
<div class="mi ic hl"><svg class="mico" width="16" height="16"><use href="#m-japp"/></svg><span class="lb">2 Java Application</span><span class="sc" style="right:auto;left:164px"><svg class="gl" width="14" height="12" viewBox="0 0 13 12" preserveAspectRatio="none"><use href="#k-opt"/></svg><svg class="gl" width="14" height="12" viewBox="0 0 13 12" preserveAspectRatio="none"><use href="#k-cmd"/></svg>X J</span></div>
<div class="sep"></div>
<div class="mi"><span class="lb">Run Configurations...</span></div>
</div>
</body>
</html>
